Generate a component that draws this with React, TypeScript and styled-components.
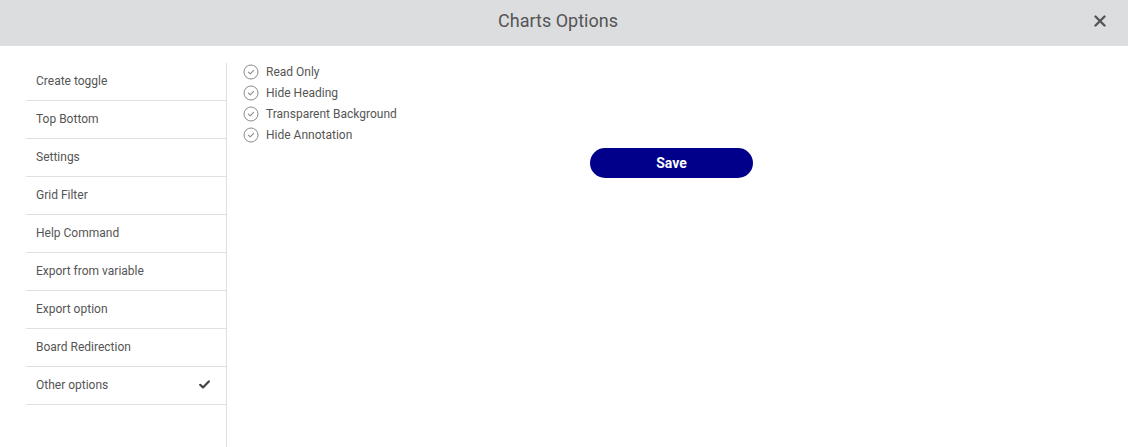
import styled, { createGlobalStyle } from 'styled-components';

const GlobalStyle = createGlobalStyle`
  *, *::before, *::after {
    box-sizing: border-box;
  }
  body {
    margin: 0;
    background: #ffffff;
    font-family: Roboto, "Liberation Sans", Arial, sans-serif;
  }
`;

const Modal = styled.div`
  width: 1128px;
  height: 447px;
  display: flex;
  flex-direction: column;
  overflow: hidden;
  background: #ffffff;
`;

const Header = styled.div`
  position: relative;
  height: 46px;
  flex-shrink: 0;
  background: #dcdddf;
  display: flex;
  align-items: center;
  justify-content: center;
  padding-right: 12px;
`;

const Title = styled.h2`
  margin: 0;
  font-size: 18px;
  font-weight: 400;
  color: #555555;
  padding-bottom: 5px;
`;

const Close = styled.button`
  position: absolute;
  right: 20px;
  top: 13px;
  width: 16px;
  height: 16px;
  padding: 0;
  border: none;
  background: transparent;
  cursor: pointer;
  display: flex;
  align-items: center;
  justify-content: center;
`;

const Body = styled.div`
  flex: 1;
  display: flex;
  padding-top: 15px;
`;

const Sidebar = styled.ul`
  list-style: none;
  margin: 2px 0 0 26px;
  padding: 0;
  width: 201px;
  border-right: 1px solid #e0e0e0;
`;

const Item = styled.li<{ $active?: boolean }>`
  height: 38px;
  border-bottom: 1px solid #e0e0e0;
  display: flex;
  align-items: center;
  justify-content: space-between;
  padding: 0 16px 2px 10px;
  font-size: 12px;
  color: #555555;
  cursor: pointer;
`;

const Content = styled.div`
  flex: 1;
  padding: 0 28px 0 16px;
  display: flex;
  flex-direction: column;
`;

const Options = styled.div`
  display: flex;
  flex-direction: column;
`;

const Option = styled.label`
  height: 21px;
  display: flex;
  align-items: center;
  gap: 7px;
  font-size: 12px;
  color: #555555;
  cursor: pointer;
`;

const SaveButton = styled.button`
  align-self: center;
  margin-top: 3px;
  width: 163px;
  height: 30px;
  border: none;
  border-radius: 15px;
  background: #00008b;
  color: #ffffff;
  font-family: Roboto, "Liberation Sans", Arial, sans-serif;
  font-size: 14px;
  font-weight: 700;
  cursor: pointer;
`;

const CheckCircle = () => (
  <svg width="16" height="16" viewBox="0 0 16 16" fill="none">
    <circle cx="8" cy="8" r="7" stroke="#8a8a8a" strokeWidth="1" />
    <path d="M5.4 8.2 L7.2 9.8 L10.6 6.4" stroke="#8a8a8a" strokeWidth="1.1" strokeLinecap="round" strokeLinejoin="round" />
  </svg>
);

const Tick = () => (
  <svg width="11" height="9" viewBox="0 0 11 9">
    <path d="M1.2 4.8 L4 7.4 L9.8 1.4" fill="none" stroke="#444" strokeWidth="2.2" strokeLinecap="round" strokeLinejoin="round" />
  </svg>
);

const menu = [
  'Create toggle',
  'Top Bottom',
  'Settings',
  'Grid Filter',
  'Help Command',
  'Export from variable',
  'Export option',
  'Board Redirection',
  'Other options',
];

const options = ['Read Only', 'Hide Heading', 'Transparent Background', 'Hide Annotation'];

export default function App() {
  return (
    <>
      <GlobalStyle />
      <Modal>
        <Header>
          <Title>Charts Options</Title>
          <Close aria-label="Close">
            <svg width="12" height="12" viewBox="0 0 12 12">
              <path d="M1.5 1.5 L10.5 10.5 M10.5 1.5 L1.5 10.5" stroke="#555" strokeWidth="2.4" strokeLinecap="round" />
            </svg>
          </Close>
        </Header>
        <Body>
          <Sidebar>
            {menu.map((m) => (
              <Item key={m} $active={m === 'Other options'}>
                {m}
                {m === 'Other options' && <Tick />}
              </Item>
            ))}
          </Sidebar>
          <Content>
            <Options>
              {options.map((o) => (
                <Option key={o}>
                  <CheckCircle />
                  {o}
                </Option>
              ))}
            </Options>
            <SaveButton>Save</SaveButton>
          </Content>
        </Body>
      </Modal>
    </>
  );
}
